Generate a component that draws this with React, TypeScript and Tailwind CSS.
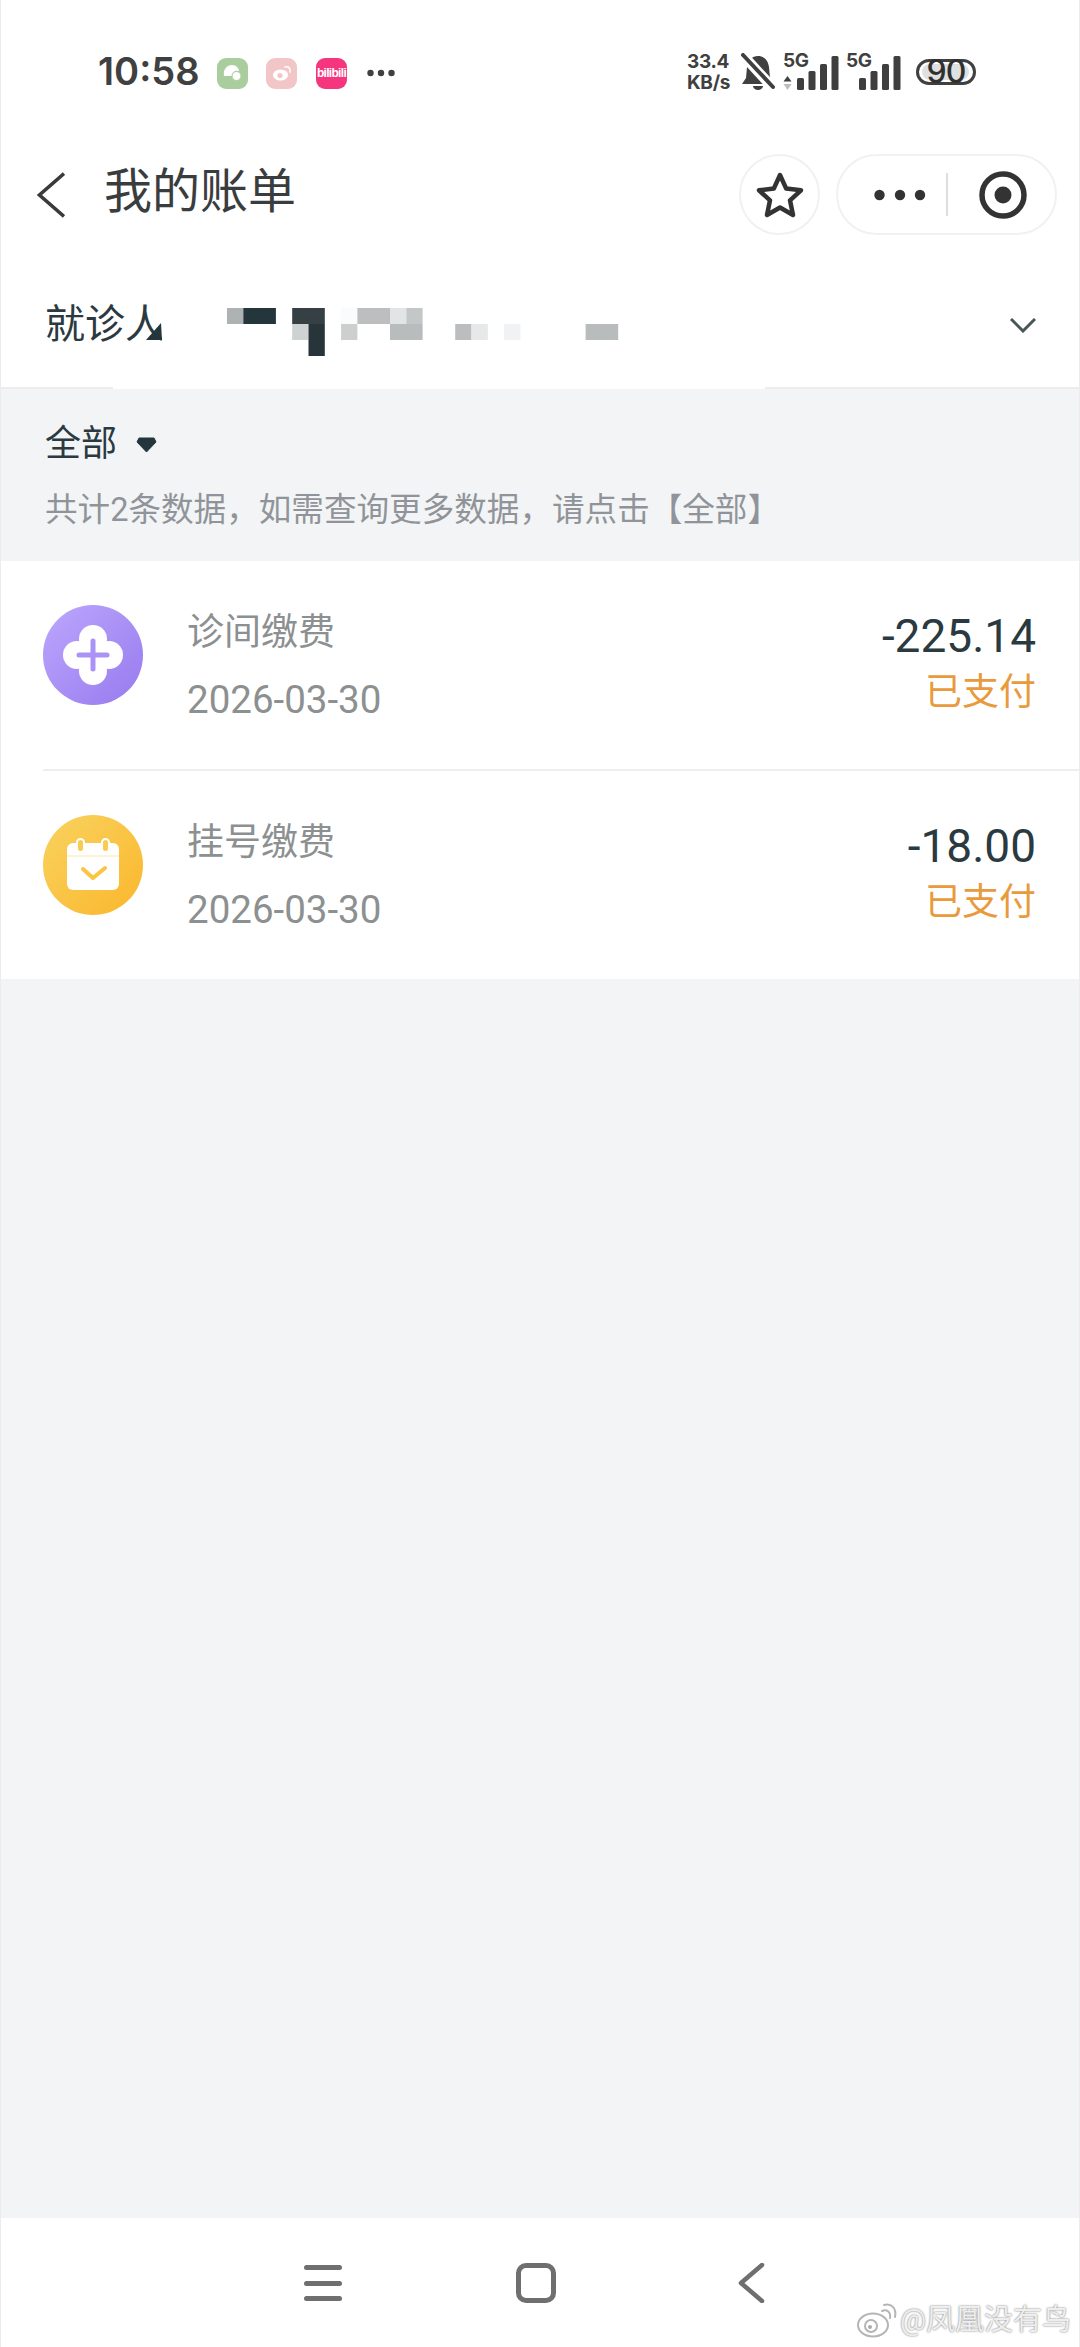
const mosaic: [number, number, number, string][] = [
  [0, 0, 1, "#adb3b3"], [1, 0, 2, "#24363c"], [4, 0, 2, "#363f43"], [7, 0, 1, "#fafbfc"], [8, 0, 2, "#bcbec0"], [10, 0, 1, "#e2e4e5"], [11, 0, 1, "#c3c7c7"],
  [4, 1, 1, "#ced2d2"], [5, 1, 1, "#27353a"], [7, 1, 1, "#cdcfcf"], [10, 1, 2, "#b8bcbc"], [14, 1, 1, "#bcbdbe"], [15, 1, 1, "#e7e8e8"], [17, 1, 1, "#f1f2f4"], [22, 1, 2, "#b8bcbc"],
  [5, 2, 1, "#27353a"],
];

function Bars() {
  return (
    <svg width="42" height="34" viewBox="0 0 42 34" className="block">
      <rect x="0" y="22" width="7" height="12" rx="1.5" fill="#3f3f3f" />
      <rect x="11.5" y="15" width="7" height="19" rx="1.5" fill="#3f3f3f" />
      <rect x="23" y="8" width="7" height="26" rx="1.5" fill="#3f3f3f" />
      <rect x="34.5" y="0" width="7" height="34" rx="1.5" fill="#3f3f3f" />
    </svg>
  );
}

function StatusBar() {
  return (
    <div className="flex h-[154px] items-start pl-[97px] pr-[103px] pt-[53px]">
      <div className="flex h-[37px] items-center">
        <span className="w-[119px] font-['Inter',sans-serif] text-[38px] font-semibold leading-[37px] text-[#404040]">10:58</span>
        <div className="mt-[3px] flex h-[31px] w-[31px] items-center justify-center rounded-[9px] bg-[#a9cd9d]">
          <svg width="20" height="18" viewBox="0 0 20 18">
            <path d="M1 12C0 5 4 1 9 1c4 0 7 3 7 6-4-1-7 1-7 5H1z" fill="#fff" />
            <circle cx="13.5" cy="12" r="4.5" fill="#fff" stroke="#a9cd9d" strokeWidth="1" />
          </svg>
        </div>
        <div className="ml-[18px] mt-[3px] flex h-[31px] w-[31px] items-center justify-center rounded-[9px] bg-[#f2c6c6]">
          <svg width="20" height="16" viewBox="0 0 20 16">
            <ellipse cx="8.5" cy="10" rx="7.5" ry="5.5" fill="#fff" />
            <circle cx="8" cy="10.5" r="2.6" fill="#f2c6c6" />
            <path d="M13 2c3-1 6 1 5 5" fill="none" stroke="#fff" strokeWidth="1.6" strokeLinecap="round" />
          </svg>
        </div>
        <div className="ml-[19px] mt-[3px] flex h-[31px] w-[31px] items-center justify-center overflow-hidden rounded-[9px] bg-[#f5367f]">
          <span className="font-['Liberation_Sans',sans-serif] text-[12px] font-bold leading-none tracking-[-0.7px] text-white">bilibili</span>
        </div>
        <svg width="28" height="8" viewBox="0 0 28 8" className="ml-[20px] mt-[3px] block">
          <circle cx="3.5" cy="4" r="3.2" fill="#404040" />
          <circle cx="14" cy="4" r="3.2" fill="#404040" />
          <circle cx="24.5" cy="4" r="3.2" fill="#404040" />
        </svg>
      </div>
      <div className="ml-auto flex h-[37px] items-center font-['Inter',sans-serif] font-bold text-[#404040]">
        <div className="flex w-[54px] flex-col text-[19px] leading-[21px] tracking-[-0.3px]">
          <span>33.4</span>
          <span>KB/s</span>
        </div>
        <svg width="34" height="37" viewBox="0 0 34 37" className="block">
          <path d="M17 3c6 0 10 4 11 11l1 11 4 6H1l4-6 1-11C7 7 11 3 17 3z" fill="#404040" />
          <path d="M12 33a5 4 0 0 0 10 0z" fill="#404040" />
          <path d="M0 0L34 37" stroke="#fff" strokeWidth="10" />
          <path d="M2 2L32 34" stroke="#404040" strokeWidth="4" strokeLinecap="round" />
        </svg>
        <div className="relative ml-[8px] h-[37px] w-[55px]">
          <span className="absolute left-0 top-[-2px] text-[19px] leading-[19px] tracking-[-0.5px]">5G</span>
          <svg width="9" height="14" viewBox="0 0 9 14" className="absolute left-0 top-[23px]">
            <path d="M4.500 0L8.500 5.500H.5z" fill="#404040" />
            <path d="M4.500 14L8.500 8H.5z" fill="#bdbdbd" />
          </svg>
          <div className="absolute bottom-0 left-[14px]"><Bars /></div>
        </div>
        <div className="relative ml-[8px] h-[37px] w-[55px]">
          <span className="absolute left-0 top-[-2px] text-[19px] leading-[19px] tracking-[-0.5px]">5G</span>
          <div className="absolute bottom-0 left-[13px]"><Bars /></div>
        </div>
        <div className="relative ml-[15px] flex h-[26px] w-[60px] items-center justify-center rounded-full border-[3px] border-[#404040] bg-white">
          <div className="absolute inset-y-[2px] left-[3px] right-[4px] rounded-full bg-[#e0e0e0]" />
          <span className="relative font-['Inter',sans-serif] text-[32px] font-medium leading-[26px] tracking-[-1px] text-[#303030]">90</span>
        </div>
      </div>
    </div>
  );
}

function NavBar() {
  return (
    <div className="flex h-[81px] items-center">
      <svg width="28" height="46" viewBox="0 0 28 46" className="ml-[36px] block">
        <path d="M27 1.500L2.500 23 27 44.500" fill="none" stroke="#3a3a3a" strokeWidth="3.500" />
      </svg>
      <span className="mb-[6px] ml-[39px] text-[48px] leading-[60px] text-[#3a3d3e]">我的账单</span>
      <div className="ml-auto flex h-[81px] w-[81px] items-center justify-center rounded-full border-2 border-[#f1f1f1]">
        <svg width="48" height="46" viewBox="0 0 48 46">
          <path d="M24 3l6.200 13.600 14.800 1.700-11 10 3 14.700L24 35.500 11 43l3-14.700-11-10 14.800-1.700z" fill="none" stroke="#333" strokeWidth="4.500" strokeLinejoin="round" />
        </svg>
      </div>
      <div className="ml-[16px] mr-[22px] flex h-[81px] w-[221px] items-center rounded-full border-2 border-[#f1f1f1]">
        <svg width="52" height="12" viewBox="0 0 52 12" className="ml-[36px] block">
          <circle cx="5.500" cy="6" r="5.200" fill="#333" />
          <circle cx="26" cy="6" r="5.200" fill="#333" />
          <circle cx="46" cy="6" r="5.200" fill="#333" />
        </svg>
        <div className="ml-[20px] h-[43px] w-[2px] bg-[#dedede]" />
        <svg width="48" height="48" viewBox="0 0 48 48" className="ml-[31px] block">
          <circle cx="24" cy="24" r="21" fill="none" stroke="#333" strokeWidth="5.500" />
          <circle cx="24" cy="24" r="8.500" fill="#333" />
        </svg>
      </div>
    </div>
  );
}

function Patient() {
  return (
    <div className="relative h-[154px] border-b-2 border-[#ededed] pl-[44px] pt-[66px]">
      <div className="flex items-center">
        <span className="text-[40px] leading-[48px] text-[#2a3a40]">就诊人</span>
        <svg width="26" height="15" viewBox="0 0 26 15" className="ml-auto mr-[43px] mt-[1px] block">
          <path d="M1 1l12 12L25 1" fill="none" stroke="#4a5558" strokeWidth="3" />
        </svg>
      </div>
      <div className="absolute bottom-[-2px] left-[112px] h-[2px] w-[652px] bg-white" />
      <svg width="620" height="70" viewBox="0 0 620 70" className="absolute left-[144px] top-[60px] block">
        <rect x="17" y="0" width="603" height="70" fill="#fff" />
        <polygon points="1,45 16,28 17,45" fill="#24363c" />
        {mosaic.map(([c, r, w, fill], i) => (
          <rect key={i} x={82 + c * 16.3} y={13 + r * 16} width={w * 16.3} height={16} fill={fill} />
        ))}
      </svg>
    </div>
  );
}

function Flower() {
  return (
    <svg width="100" height="100" viewBox="0 0 100 100" className="block shrink-0">
      <defs>
        <linearGradient id="purple" x1="0" y1="0" x2="1" y2="1">
          <stop offset="0" stopColor="#bba7fc" />
          <stop offset="1" stopColor="#977aef" />
        </linearGradient>
      </defs>
      <circle cx="50" cy="50" r="50" fill="url(#purple)" />
      <circle cx="50" cy="34" r="14" fill="#fff" />
      <circle cx="50" cy="66" r="14" fill="#fff" />
      <circle cx="34" cy="50" r="14" fill="#fff" />
      <circle cx="66" cy="50" r="14" fill="#fff" />
      <path d="M50 36v28M36 50h28" stroke="#ab93f6" strokeWidth="5" strokeLinecap="round" />
    </svg>
  );
}

function CalendarIcon() {
  return (
    <svg width="100" height="100" viewBox="0 0 100 100" className="block shrink-0">
      <defs>
        <linearGradient id="amber" x1="0" y1="0" x2="1" y2="1">
          <stop offset="0" stopColor="#f8d35f" />
          <stop offset="1" stopColor="#fbb62c" />
        </linearGradient>
      </defs>
      <circle cx="50" cy="50" r="50" fill="url(#amber)" />
      <path d="M24 34a6 6 0 0 1 6-6h40a6 6 0 0 1 6 6v35a6 6 0 0 1-6 6H30a6 6 0 0 1-6-6z" fill="#fff" />
      <path d="M24 41h52" stroke="#fde7ac" strokeWidth="1" />
      <rect x="34" y="24" width="7" height="13" rx="3.500" fill="#fbcb4f" stroke="#fff" strokeWidth="2" />
      <rect x="59" y="24" width="7" height="13" rx="3.500" fill="#fbcb4f" stroke="#fff" strokeWidth="2" />
      <path d="M40 54l10 9 12-10" fill="none" stroke="#fbc441" strokeWidth="4" strokeLinecap="round" strokeLinejoin="round" />
    </svg>
  );
}

function Row({ icon, title, amount }: { icon: React.ReactNode; title: string; amount: string }) {
  return (
    <div className="flex h-[208px] items-start pl-[42px] pr-[43px]">
      <div className="mt-[44px]">{icon}</div>
      <div className="ml-[44px] pt-[49px]">
        <div className="text-[37px] leading-[46px] text-[#8c9091]">{title}</div>
        <div className="mt-[21px] text-[38.500px] leading-[46px] text-[#8c9091]">2026-03-30</div>
      </div>
      <div className="ml-auto pt-[49px] text-right">
        <div className="text-[46px] leading-[52px] text-[#2a3a40]">{amount}</div>
        <div className="mt-[6px] text-[37px] leading-[50px] text-[#e99a3c]">已支付</div>
      </div>
    </div>
  );
}

export default function App() {
  return (
    <div className="flex h-[2347px] w-[1080px] flex-col overflow-hidden border-x border-[#ececec] bg-[#f3f4f5] font-['Roboto','Noto_Sans_CJK_SC',sans-serif]">
      <div className="bg-white">
        <StatusBar />
        <NavBar />
        <Patient />
      </div>
      <div className="h-[172px] pl-[44px] pt-[35px]">
        <div className="flex items-center">
          <span className="text-[36px] leading-[40px] text-[#2a3a40]">全部</span>
          <svg width="21" height="16" viewBox="0 0 21 16" className="ml-[19px] mt-[2px] block">
            <path d="M3 1h15l2 4-9.500 10L1 5z" fill="#24363c" stroke="#24363c" strokeLinejoin="round" />
          </svg>
        </div>
        <div className="mt-[26px] text-[32.600px] leading-[40px] text-[#90949a]">共计2条数据，如需查询更多数据，请点击【全部】</div>
      </div>
      <div className="bg-white">
        <Row icon={<Flower />} title="诊间缴费" amount="-225.14" />
        <div className="ml-[42px] h-[2px] bg-[#eeeeee]" />
        <Row icon={<CalendarIcon />} title="挂号缴费" amount="-18.00" />
      </div>
      <div className="flex-1" />
      <div className="relative flex h-[129px] bg-white">
        <div className="ml-[303px] mt-[47px] flex h-[36px] w-[38px] flex-col justify-between">
          <div className="h-[5px] rounded-full bg-[#6f6f6f]" />
          <div className="h-[5px] rounded-full bg-[#6f6f6f]" />
          <div className="h-[5px] rounded-full bg-[#6f6f6f]" />
        </div>
        <div className="ml-[174px] mt-[45px] h-[40px] w-[40px] rounded-[10px] border-[5px] border-[#6f6f6f]" />
        <svg width="28" height="40" viewBox="0 0 28 40" className="ml-[181px] mt-[45px] block">
          <path d="M25 2L4 20l21 18" fill="none" stroke="#6f6f6f" strokeWidth="4.500" strokeLinecap="round" strokeLinejoin="round" />
        </svg>
        <div className="absolute left-[855px] top-[84px] flex items-center">
          <svg width="42" height="36" viewBox="0 0 42 36" className="block">
            <ellipse cx="17" cy="23" rx="15" ry="11.500" fill="#fff" stroke="#b5b5b5" strokeWidth="2" />
            <circle cx="15" cy="24" r="6" fill="#fff" stroke="#b5b5b5" strokeWidth="2" />
            <circle cx="14" cy="25" r="2" fill="#aaa" />
            <path d="M26 9c5-2 9 1 8 7M28 3c7-2 13 3 11 12" fill="none" stroke="#b5b5b5" strokeWidth="2" strokeLinecap="round" />
          </svg>
          <span className="ml-[2px] text-[29px] leading-[34px] text-[#eeeeee] [text-shadow:0_0_2px_#666]">@凤凰没有鸟</span>
        </div>
      </div>
    </div>
  );
}
